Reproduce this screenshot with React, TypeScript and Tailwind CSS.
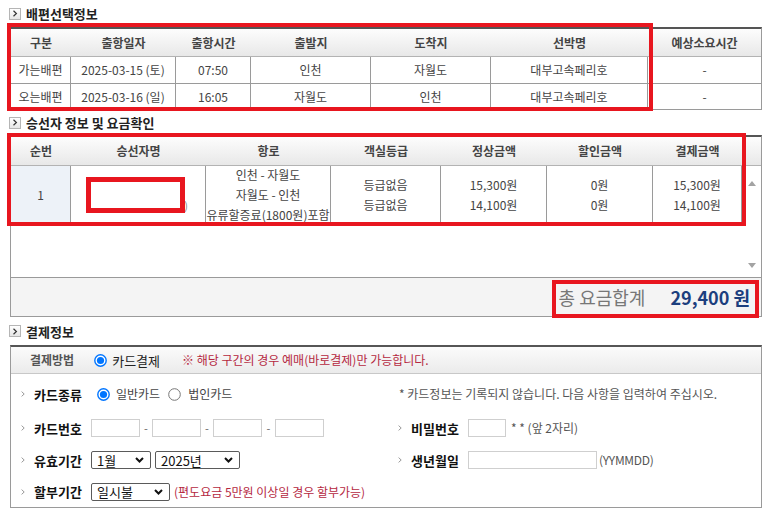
import React from "react";

function TitleIcon() {
  return (
    <span className="flex h-[12px] w-[12px] items-center justify-center border border-[#b5b5b5] bg-linear-to-b from-white to-[#e6e6e6]">
      <svg width="6" height="7" viewBox="0 0 6 7">
        <path d="M1.5 0.8 L4.4 3.5 L1.5 6.2" fill="none" stroke="#333" strokeWidth="1.2" />
      </svg>
    </span>
  );
}

function SectionTitle({ title, h }: { title: string; h: string }) {
  return (
    <div className={`flex items-center gap-[5px] pl-[9px] ${h}`}>
      <TitleIcon />
      <span className="text-[13px] font-bold leading-none text-[#222]">{title}</span>
    </div>
  );
}

function Radio({ checked }: { checked?: boolean }) {
  return checked ? (
    <svg width="13" height="13" viewBox="0 0 13 13" className="shrink-0">
      <circle cx="6.5" cy="6.5" r="5.7" fill="white" stroke="#0075ff" strokeWidth="1.4" />
      <circle cx="6.5" cy="6.5" r="3.6" fill="#0075ff" />
    </svg>
  ) : (
    <svg width="13" height="13" viewBox="0 0 13 13" className="shrink-0">
      <circle cx="6.5" cy="6.5" r="5.8" fill="white" stroke="#767676" strokeWidth="1" />
    </svg>
  );
}

function Select({ w, value }: { w: string; value: string }) {
  return (
    <div className={`relative flex h-[18px] items-center rounded-[2px] border border-[#5a5a5a] bg-white pl-[5px] ${w}`}>
      <span className="text-[13px] leading-none text-[#111]">{value}</span>
      <svg width="9" height="6" viewBox="0 0 9 6" className="absolute right-[6px] top-[5px]">
        <path d="M1 1 L4.5 4.5 L8 1" fill="none" stroke="#111" strokeWidth="2" />
      </svg>
    </div>
  );
}

function Marker() {
  return (
    <span className="flex w-[23px] shrink-0 items-center pl-[10px]">
      <svg width="4" height="6" viewBox="0 0 4 6">
        <path d="M0.6 0.6 L3.2 3 L0.6 5.4" fill="none" stroke="#9a9a9a" strokeWidth="1" />
      </svg>
    </span>
  );
}

function Label({ children }: { children: React.ReactNode }) {
  return <span className="w-[57px] shrink-0 text-[13px] font-bold leading-none text-[#111]">{children}</span>;
}

function RedBox({ cls }: { cls: string }) {
  return <div className={`pointer-events-none absolute border-[#e8161f] ${cls}`} />;
}

export default function App() {
  const t1Head = ["구분", "출항일자", "출항시간", "출발지", "도착지", "선박명", "예상소요시간"];
  const t1Rows = [
    ["가는배편", "2025-03-15 (토)", "07:50", "인천", "자월도", "대부고속페리호", "-"],
    ["오는배편", "2025-03-16 (일)", "16:05", "자월도", "인천", "대부고속페리호", "-"],
  ];
  const t2Head = ["순번", "승선자명", "항로", "객실등급", "정상금액", "할인금액", "결제금액"];

  return (
    <div className="relative h-[515px] w-[767px] overflow-hidden bg-white font-['Noto_Sans_CJK_KR','Noto_Sans',sans-serif] text-[#444]">
      {/* Section 1 */}
      <SectionTitle title="배편선택정보" h="h-[27px]" />
      <div className="ml-[10px] w-[752px] border-x border-t-2 border-x-[#9a9a9a] border-t-[#555]">
        <div className="grid h-[28px] grid-cols-[60px_105px_75px_120px_120px_157px_113px] items-center border-b border-[#b3b3b3] bg-linear-to-b from-[#fdfdfd] to-[#e8e8e8] text-center text-[12px] font-bold leading-none text-[#444]">
          {t1Head.map((h) => (
            <div key={h}>{h}</div>
          ))}
        </div>
        {t1Rows.map((r, i) => (
          <div
            key={i}
            className={`grid grid-cols-[60px_105px_75px_120px_120px_157px_113px] border-b border-[#9a9a9a] text-[12px] leading-none text-[#444] ${i === 0 ? "h-[27px]" : "h-[26px]"}`}
          >
            {r.map((c, j) => (
              <div key={j} className={`flex items-center justify-center ${j < 6 ? "border-r border-[#9a9a9a]" : ""}`}>
                {c}
              </div>
            ))}
          </div>
        ))}
      </div>

      {/* Section 2 */}
      <SectionTitle title="승선자 정보 및 요금확인" h="h-[25px]" />
      <div className="ml-[10px] w-[752px] border-x border-t-2 border-b border-x-[#9a9a9a] border-t-[#555] border-b-[#9a9a9a]">
        <div className="flex h-[29px] border-b border-[#b3b3b3] bg-linear-to-b from-[#fdfdfd] to-[#e8e8e8]">
          <div className="grid w-[731px] grid-cols-[60px_135px_125px_110px_106px_106px_89px] items-center text-center text-[12px] font-bold leading-none text-[#444]">
            {t2Head.map((h) => (
              <div key={h}>{h}</div>
            ))}
          </div>
        </div>
        <div className="flex h-[111px]">
          <div className="w-[731px]">
            <div className="grid h-[58px] grid-cols-[60px_135px_125px_110px_106px_106px_89px] border-b border-[#9a9a9a] text-[12px] leading-none text-[#444]">
              <div className="flex items-center justify-center border-r border-[#9a9a9a] bg-[#edf2f8]">1</div>
              <div className="flex items-end justify-end border-r border-[#9a9a9a] pb-[12px] pr-[17px]">
                <span className="text-[11px] text-[#888]">)</span>
              </div>
              <div className="flex flex-col items-center justify-center gap-[8px] border-r border-[#9a9a9a]">
                <span>인천 - 자월도</span>
                <span>자월도 - 인천</span>
                <span>유류할증료(1800원)포함</span>
              </div>
              <div className="flex flex-col items-center justify-center gap-[8px] border-r border-[#9a9a9a]">
                <span>등급없음</span>
                <span>등급없음</span>
              </div>
              <div className="flex flex-col items-center justify-center gap-[8px] border-r border-[#9a9a9a]">
                <span>15,300원</span>
                <span>14,100원</span>
              </div>
              <div className="flex flex-col items-center justify-center gap-[8px] border-r border-[#9a9a9a]">
                <span>0원</span>
                <span>0원</span>
              </div>
              <div className="flex flex-col items-center justify-center gap-[8px] border-r border-[#9a9a9a]">
                <span>15,300원</span>
                <span>14,100원</span>
              </div>
            </div>
          </div>
          <div className="flex w-[19px] flex-col items-center justify-between pb-[9px] pt-[15px]">
            <svg width="8" height="5" viewBox="0 0 8 5">
              <path d="M0 5 L4 0 L8 5 Z" fill="#a3a3a3" />
            </svg>
            <svg width="8" height="5" viewBox="0 0 8 5">
              <path d="M0 0 L8 0 L4 5 Z" fill="#a3a3a3" />
            </svg>
          </div>
        </div>
        <div className="flex h-[39px] items-center justify-end border-t border-[#9a9a9a] bg-[#f4f4f4] pr-[11px]">
          <span className="text-[18px] leading-none text-[#777]">총 요금합계</span>
          <span className="ml-[25px] text-[18px] font-bold leading-none text-[#1c3f7e]">29,400 원</span>
        </div>
      </div>

      {/* Section 3 */}
      <SectionTitle title="결제정보" h="h-[28px]" />
      <div className="ml-[10px] w-[752px] border-x border-t-2 border-b border-x-[#9a9a9a] border-t-[#555] border-b-[#9a9a9a]">
        <div className="flex h-[27px] items-center border-b border-[#c8c8c8] bg-linear-to-b from-[#fbfbfb] to-[#ebebeb]">
          <span className="ml-[19px] text-[12px] font-bold leading-none text-[#555]">결제방법</span>
          <span className="ml-[20px] flex items-center gap-[5px]">
            <Radio checked />
            <span className="text-[13px] leading-none text-[#222]">카드결제</span>
          </span>
          <span className="ml-[22px] text-[12px] leading-none text-[#b5283f]">
            ※ 해당 구간의 경우 예매(바로결제)만 가능합니다.
          </span>
        </div>
        <div className="grid grid-cols-[377px_1fr] pt-[4px]">
          {/* row 1 */}
          <div className="flex h-[32px] items-center">
            <Marker />
            <span className="w-[63px] shrink-0 text-[13px] font-bold leading-none text-[#111]">카드종류</span>
            <Radio checked />
            <span className="ml-[6px] text-[12px] leading-none text-[#444]">일반카드</span>
            <span className="ml-[8px]">
              <Radio />
            </span>
            <span className="ml-[7px] text-[12px] leading-none text-[#444]">법인카드</span>
          </div>
          <div className="flex h-[32px] items-center pl-[11px]">
            <span className="text-[12px] leading-none text-[#555]">
              * 카드정보는 기록되지 않습니다. 다음 사항을 입력하여 주십시오.
            </span>
          </div>
          {/* row 2 */}
          <div className="mt-[2px] flex h-[32px] items-center">
            <Marker />
            <Label>카드번호</Label>
            <input className="h-[18px] w-[49px] border border-[#cfcfcf] bg-white" />
            <span className="w-[12px] text-center text-[11px] leading-none text-[#666]">-</span>
            <input className="h-[18px] w-[49px] border border-[#cfcfcf] bg-white" />
            <span className="w-[12px] text-center text-[11px] leading-none text-[#666]">-</span>
            <input className="h-[18px] w-[49px] border border-[#cfcfcf] bg-white" />
            <span className="w-[13px] text-center text-[11px] leading-none text-[#666]">-</span>
            <input className="h-[18px] w-[49px] border border-[#cfcfcf] bg-white" />
          </div>
          <div className="mt-[2px] flex h-[32px] items-center">
            <Marker />
            <Label>비밀번호</Label>
            <input className="h-[18px] w-[38px] border border-[#cfcfcf] bg-white" />
            <span className="ml-[5px] text-[12px] leading-none text-[#555]">* * (앞 2자리)</span>
          </div>
          {/* row 3 */}
          <div className="flex h-[32px] items-center">
            <Marker />
            <Label>유효기간</Label>
            <Select w="w-[60px]" value="1월" />
            <span className="ml-[4px]">
              <Select w="w-[85px]" value="2025년" />
            </span>
          </div>
          <div className="flex h-[32px] items-center">
            <Marker />
            <Label>생년월일</Label>
            <input className="h-[18px] w-[129px] border border-[#cfcfcf] bg-white" />
            <span className="ml-[2px] text-[12px] tracking-[-0.3px] leading-none text-[#555]">(YYMMDD)</span>
          </div>
          {/* row 4 */}
          <div className="flex h-[31px] items-center">
            <Marker />
            <Label>할부기간</Label>
            <Select w="w-[79px]" value="일시불" />
            <span className="ml-[4px] text-[12px] leading-none text-[#b5283f]">(편도요금 5만원 이상일 경우 할부가능)</span>
          </div>
          <div className="h-[31px]" />
        </div>
      </div>

      {/* red annotation overlays */}
      <RedBox cls="left-[7px] top-[23px] h-[88px] w-[646px] border-[4px]" />
      <RedBox cls="left-[7px] top-[133px] h-[93px] w-[739px] border-[4px]" />
      <div className="pointer-events-none absolute left-[86px] top-[177px] h-[36px] w-[99px] border-[5px] border-[#e8161f] bg-white" />
      <RedBox cls="left-[552px] top-[280px] h-[38px] w-[207px] border-[4px]" />
    </div>
  );
}
